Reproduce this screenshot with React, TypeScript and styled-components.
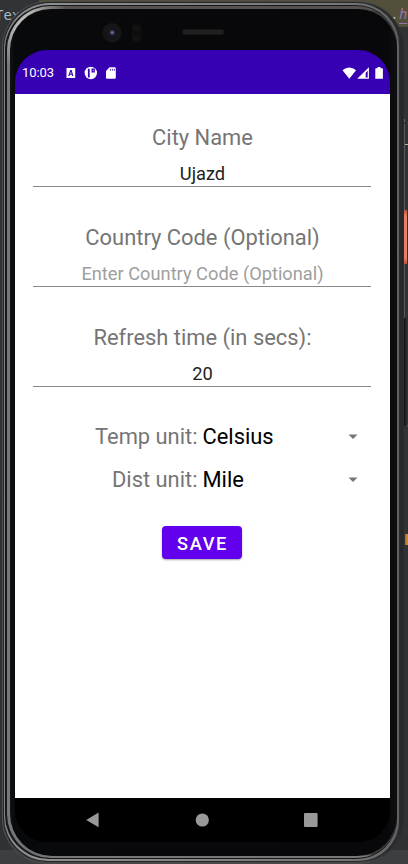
import React from 'react';
import styled, { createGlobalStyle } from 'styled-components';

const GlobalStyle = createGlobalStyle`
  * { box-sizing: border-box; }
  body { margin: 0; background: #2b2b2b; font-family: Roboto, sans-serif; }
`;

const Desktop = styled.div`
  position: relative;
  width: 408px;
  height: 864px;
  overflow: hidden;
  padding: 1px 4px 0 2px;
  background:
    linear-gradient(#3c3f41, #3c3f41) 0 850px / 100% 14px no-repeat,
    linear-gradient(#52503a, #52503a) 100% 0 / 369px 27px no-repeat,
    linear-gradient(#313335, #303132);
`;

const CodeText = styled.span<{ $x: number; $y: number; $color: string; $italic?: boolean }>`
  position: absolute;
  left: ${p => p.$x}px;
  top: ${p => p.$y}px;
  font: ${p => (p.$italic ? 'italic' : 'normal')} 14px/18px "DejaVu Sans Mono", monospace;
  color: ${p => p.$color};
  text-decoration: ${p => (p.$italic ? 'underline' : 'none')};
  text-underline-offset: 4px;
`;

const EdgeMark = styled.i<{ $y: number; $h: number; $w: number; $color: string; $right?: number }>`
  position: absolute;
  right: ${p => p.$right ?? 0}px;
  top: ${p => p.$y}px;
  width: ${p => p.$w}px;
  height: ${p => p.$h}px;
  background: ${p => p.$color};
`;

const OuterRim = styled.div`
  position: relative;
  width: 402px;
  height: 863px;
  padding: 1px 1px 2px 1px;
  border-radius: 47px 47px 45px 45px;
  background: linear-gradient(90deg, #525355 0, #4a4b4f 2px, #484848 12px, #4a4949 360px, #2b2c2d 396px);
`;

const DarkGroove = styled.div`
  height: 100%;
  padding: 1px 4px 1px 1px;
  border-radius: 46px 46px 44px 44px;
  background: linear-gradient(90deg, #242529 0, #28292b 390px, #2d2e2f 394px, #262728 400px);
`;

const MetalRim = styled.div`
  height: 100%;
  padding: 2px 2px 2px 1px;
  border-radius: 46px 42px 40px 44px;
  background: linear-gradient(90deg, #828387, #909090 30px, #777 340px, #606162);
`;

const InnerGroove = styled.div`
  height: 100%;
  padding: 1px 0 1px 2px;
  border-radius: 45px 41px 40px 44px;
  background: #17181a;
`;

const Bevel = styled.div`
  height: 100%;
  padding: 3px 0 2px 3px;
  border-radius: 44px 40px 40px 44px;
  background:
    radial-gradient(circle at 10px 10px, #c4c4c2 0, #aaaaa8 18px, transparent 50px),
    linear-gradient(0deg, #777 2px, transparent 4px),
    linear-gradient(180deg, #565150 3px, transparent 6px),
    linear-gradient(90deg, #777879 0, #666 70px, #3b3939 200px);
`;

const Face = styled.div`
  height: 100%;
  padding: 41px 0 0 5px;
  border-radius: 41px 39px 40px 42px;
  background: linear-gradient(90deg, #111214 0, #08090a 5px, #08080a 378px, #0d0c0e 383px);
`;

const Camera = styled.i`
  position: absolute;
  left: 100px;
  top: 22px;
  width: 20px;
  height: 20px;
  border-radius: 50%;
  background: radial-gradient(circle at 51% 48%, #666c8c 0 1px, #272a3c 2px, #11131a 4px, #171719 6px, #151516 9px, #0d0d0e 10px);
`;

const Sensor = styled.i`
  position: absolute;
  left: 130px;
  top: 22px;
  width: 9px;
  height: 20px;
  border-radius: 5px;
  border: 1px solid #121213;
  background: radial-gradient(circle at 50% 25%, #131314 2px, transparent 4px),
    radial-gradient(circle at 50% 77%, #131314 2px, transparent 4px), #0c0c0d;
`;

const Speaker = styled.i`
  position: absolute;
  left: 180px;
  top: 28px;
  width: 42px;
  height: 6px;
  border-radius: 3px;
  border: 1px solid #171718;
  background: #202021;
`;

const Screen = styled.div`
  display: flex;
  flex-direction: column;
  width: 375px;
  height: 792px;
  overflow: hidden;
  border-radius: 32px;
  background: #000;
`;

const StatusBar = styled.header`
  flex: 0 0 44px;
  display: flex;
  align-items: center;
  justify-content: space-between;
  padding: 1px 6px 0 7px;
  background: #3700b3;
  color: #fff;
`;

const StatusGroup = styled.div`
  display: flex;
  align-items: center;
`;

const Clock = styled.span`
  width: 43px;
  font-size: 13px;
  line-height: 16px;
  letter-spacing: -0.1px;
`;

const Form = styled.main`
  flex: 1;
  display: flex;
  flex-direction: column;
  align-items: center;
  padding: 31px 18px 0;
  background: #fff;
`;

const Field = styled.label`
  display: flex;
  flex-direction: column;
  width: 339px;
  height: 100px;
  text-align: center;
`;

const Caption = styled.span`
  font-size: 21.9px;
  line-height: 26px;
  color: #757575;
`;

const Input = styled.input`
  width: 338px;
  height: 36px;
  padding: 9px 0 0 1px;
  border: 0;
  border-bottom: 1px solid #8a8a8a;
  outline: 0;
  background: transparent;
  font: 18.25px/22px Roboto, sans-serif;
  text-align: center;
  color: #212121;
  &::placeholder { color: #9e9e9e; opacity: 1; }
`;

const UnitRow = styled.div`
  display: grid;
  grid-template-columns: 164.5px 1fr 10px;
  column-gap: 5px;
  align-items: center;
  width: 339px;
  height: 43px;
  padding-right: 14px;
  font-size: 21.9px;
  line-height: 26px;
  color: #757575;
`;

const UnitLabel = styled.span`
  padding-top: 1px;
  text-align: right;
`;

const UnitValue = styled.span`
  padding-top: 1px;
  color: #000;
`;

const SaveButton = styled.button`
  width: 80px;
  height: 33px;
  margin: 25px 1px 0 0;
  padding: 2px 0 0 1px;
  border: 0;
  border-radius: 4px;
  background: #6200ee;
  box-shadow: 0 1px 2px rgba(0, 0, 0, 0.35);
  color: #fff;
  font: 500 18.25px/22px Roboto, sans-serif;
  letter-spacing: 1.6px;
`;

const NavBar = styled.nav`
  flex: 0 0 44px;
  display: flex;
  align-items: center;
  justify-content: space-between;
  padding: 0 72px 0 71px;
  background: #000;
`;

const Units = styled.section`
  display: flex;
  flex-direction: column;
  margin-top: -10px;
`;

const NotificationIcons = () => (
  <svg width="52" height="14" viewBox="0 0 52 14" fill="#fff">
    <path fillRule="evenodd" d="M1.5 2h8.7v10H1.5zM5.2 4 3.2 10h1.2l.4-1.2h2L7.2 10h1.2L6.6 4zm.7 1.5.6 2.2H5.2z" />
    <circle cx="25.8" cy="7" r="6.2" />
    <path d="M23.8 2.8v8.6" stroke="#3700b3" strokeWidth="1.8" />
    <path d="M27.2 3.2h2v2.6h-2z" fill="none" stroke="#3700b3" strokeWidth="1.3" />
    <path fillRule="evenodd" d="M44.6 1.3h5.2q1 0 1 1v9.4q0 1-1 1H42q-1 0-1-1V5zm.3 1.4v2h.8v-2zm2 0v2h.8v-2zm2 0v2h.8v-2z" />
  </svg>
);

const SystemIcons = () => (
  <svg width="42" height="14" viewBox="0 0 42 14" fill="#fff">
    <path d="M.5 4.2Q3.5 1.5 7.3 1.5t6.8 2.7L7.3 12.8z" />
    <path fillRule="evenodd" d="M26.9 1.3v11.5H15.2zm-1.2 3.4v6.9h-2V6.7z" />
    <path d="M33.3 3q0-.8.8-.8h1.4V1.1h3v1.1h1.6q.8 0 .8.8v9.8h-7.6z" />
  </svg>
);

const DropArrow = () => (
  <svg width="10" height="6" viewBox="0 0 10 6">
    <path d="M.5.5h9L5 5z" fill="#757575" />
  </svg>
);

function TextField({ label, value, hint }: { label: string; value?: string; hint?: string }) {
  return (
    <Field>
      <Caption>{label}</Caption>
      <Input defaultValue={value} placeholder={hint} />
    </Field>
  );
}

function UnitPicker({ label, value }: { label: string; value: string }) {
  return (
    <UnitRow>
      <UnitLabel>{label}</UnitLabel>
      <UnitValue>{value}</UnitValue>
      <DropArrow />
    </UnitRow>
  );
}

export default function App() {
  return (
    <>
      <GlobalStyle />
      <Desktop>
        <CodeText $x={-5} $y={6} $color="#a9b7c6">Tex</CodeText>
        <CodeText $x={390} $y={5} $color="#a9b7c6">.</CodeText>
        <CodeText $x={399} $y={5} $color="#9876aa" $italic>h</CodeText>
        <EdgeMark $y={119} $h={3} $w={1} $right={3} $color="#66686a" />
        <EdgeMark $y={144} $h={1} $w={3} $color="#b5b69a" />
        <EdgeMark $y={425} $h={1} $w={3} $color="#66686a" />
        <EdgeMark $y={534} $h={11} $w={3} $color="linear-gradient(90deg,#5083ae 1px,#c9822e 1px)" />
        <OuterRim>
          <DarkGroove>
            <MetalRim>
              <InnerGroove>
                <Bevel>
                  <Face>
                    <Screen>
                      <StatusBar>
                        <StatusGroup>
                          <Clock>10:03</Clock>
                          <NotificationIcons />
                        </StatusGroup>
                        <SystemIcons />
                      </StatusBar>
                      <Form>
                        <TextField label="City Name" value="Ujazd" />
                        <TextField label="Country Code (Optional)" hint="Enter Country Code (Optional)" />
                        <TextField label="Refresh time (in secs):" value="20" />
                        <Units>
                          <UnitPicker label="Temp unit:" value="Celsius" />
                          <UnitPicker label="Dist unit:" value="Mile" />
                        </Units>
                        <SaveButton>SAVE</SaveButton>
                      </Form>
                      <NavBar>
                        <svg width="13" height="16" viewBox="0 0 13 16"><path d="M12.6.5v14.8L.2 7.9z" fill="#999" /></svg>
                        <svg width="14" height="14" viewBox="0 0 14 14"><circle cx="7.3" cy="7" r="6.6" fill="#999" /></svg>
                        <svg width="14" height="14" viewBox="0 0 14 14"><rect width="13.6" height="14" rx="1" fill="#999" /></svg>
                      </NavBar>
                    </Screen>
                  </Face>
                </Bevel>
              </InnerGroove>
            </MetalRim>
          </DarkGroove>
          <Camera />
          <Sensor />
          <Speaker />
        </OuterRim>
        <EdgeMark $y={124} $h={86} $w={1} $right={3} $color="#58595a" />
        <EdgeMark $y={210} $h={54} $w={3} $right={1} $color="linear-gradient(#b4533b,#ed7c63 6px,#ed7c63 48px,#b4533b)" />
        <EdgeMark $y={264} $h={54} $w={1} $right={3} $color="#58595a" />
        <EdgeMark $y={318} $h={108} $w={3} $right={1} $color="linear-gradient(90deg,#101112,#303132)" />
      </Desktop>
    </>
  );
}
